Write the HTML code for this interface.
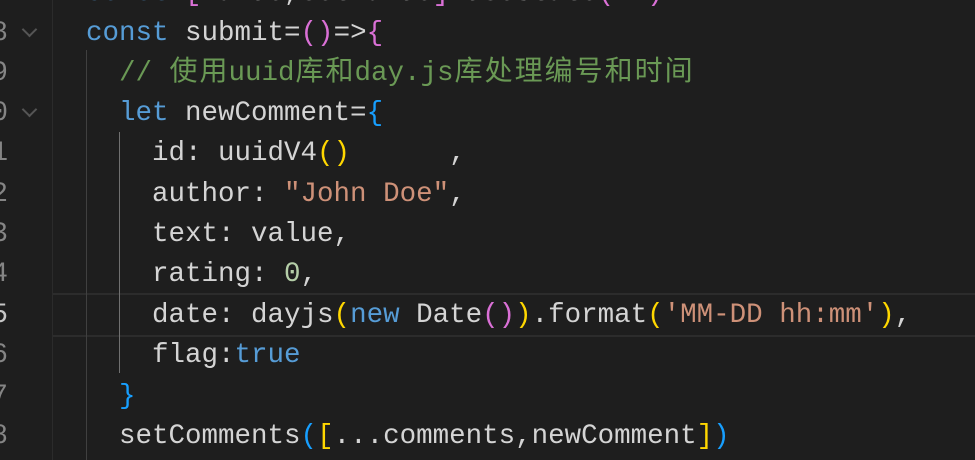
<!DOCTYPE html>
<html><head><meta charset="utf-8"><style>
html,body{margin:0;padding:0;background:#1e1e1e;width:975px;height:460px;overflow:hidden;position:relative}
.l{position:absolute;left:86px;height:40px;line-height:40px;font-family:"Liberation Mono","Noto Sans CJK SC",monospace;font-size:27.5px;color:#d4d4d4;white-space:pre}
.n{position:absolute;right:967px;height:40px;line-height:40px;font-family:"Liberation Mono",monospace;font-size:27.5px;color:#858585}
.k{color:#569cd6}.s{color:#ce9178}.c{color:#6a9955}.num{color:#b5cea8}
.g{color:#ffd700}.o{color:#da70d6}.b{color:#179fff}
.z{display:inline-block;width:30px;text-align:center;font-size:28px}
.chev{position:absolute;left:24px;width:9px;height:9px;border-right:2px solid #555;border-bottom:2px solid #555;transform:rotate(45deg)}
</style></head><body>
<div style="position:absolute;left:53px;top:293px;width:922px;height:40px;border-top:2px solid #2c2c2c;border-bottom:2px solid #2c2c2c"></div>
<div style="position:absolute;left:52px;top:0;width:1px;height:460px;background:#2b2b2b"></div>
<div style="position:absolute;left:86px;top:50px;width:1px;height:410px;background:#404040"></div>
<div style="position:absolute;left:119px;top:132px;width:1px;height:241px;background:#707070"></div>

<div class="n" style="top:-26px">7</div>
<div class="n" style="top:14px">8</div>
<div class="n" style="top:54px">9</div>
<div class="n" style="top:94px">0</div>
<div class="n" style="top:134px">1</div>
<div class="n" style="top:175px">2</div>
<div class="n" style="top:215px">3</div>
<div class="n" style="top:255px">4</div>
<div class="n" style="top:296px;color:#c6c6c6">5</div>
<div class="n" style="top:336px">6</div>
<div class="n" style="top:377px">7</div>
<div class="n" style="top:417px">8</div>
<div class="chev" style="top:24px"></div>
<div class="chev" style="top:104px"></div>

<div class="l" style="top:-26px"><span class="k">const</span> <span class="o">[</span>value,setValue<span class="o">]</span>=useState<span class="o">(</span><span class="s">''</span><span class="o">)</span></div>
<div class="l" style="top:14px"><span class="k">const</span> submit=<span class="o">()</span>=&gt;<span class="o">{</span></div>
<div class="l" style="top:54px">  <span class="c">// <span class="z">使</span><span class="z">用</span>uuid<span class="z">库</span><span class="z">和</span>day.js<span class="z">库</span><span class="z">处</span><span class="z">理</span><span class="z">编</span><span class="z">号</span><span class="z">和</span><span class="z">时</span><span class="z">间</span></span></div>
<div class="l" style="top:94px">  <span class="k">let</span> newComment=<span class="b">{</span></div>
<div class="l" style="top:134px">    id: uuidV4<span class="g">()</span>      ,</div>
<div class="l" style="top:175px">    author: <span class="s">"John Doe"</span>,</div>
<div class="l" style="top:215px">    text: value,</div>
<div class="l" style="top:255px">    rating: <span class="num">0</span>,</div>
<div class="l" style="top:296px">    date: dayjs<span class="g">(</span><span class="k">new</span> Date<span class="o">()</span><span class="g">)</span>.format<span class="g">(</span><span class="s">'MM-DD hh:mm'</span><span class="g">)</span>,</div>
<div class="l" style="top:336px">    flag:<span class="k">true</span></div>
<div class="l" style="top:377px">  <span class="b">}</span></div>
<div class="l" style="top:417px">  setComments<span class="b">(</span><span class="g">[</span>...comments,newComment<span class="g">]</span><span class="b">)</span></div>
</body></html>
